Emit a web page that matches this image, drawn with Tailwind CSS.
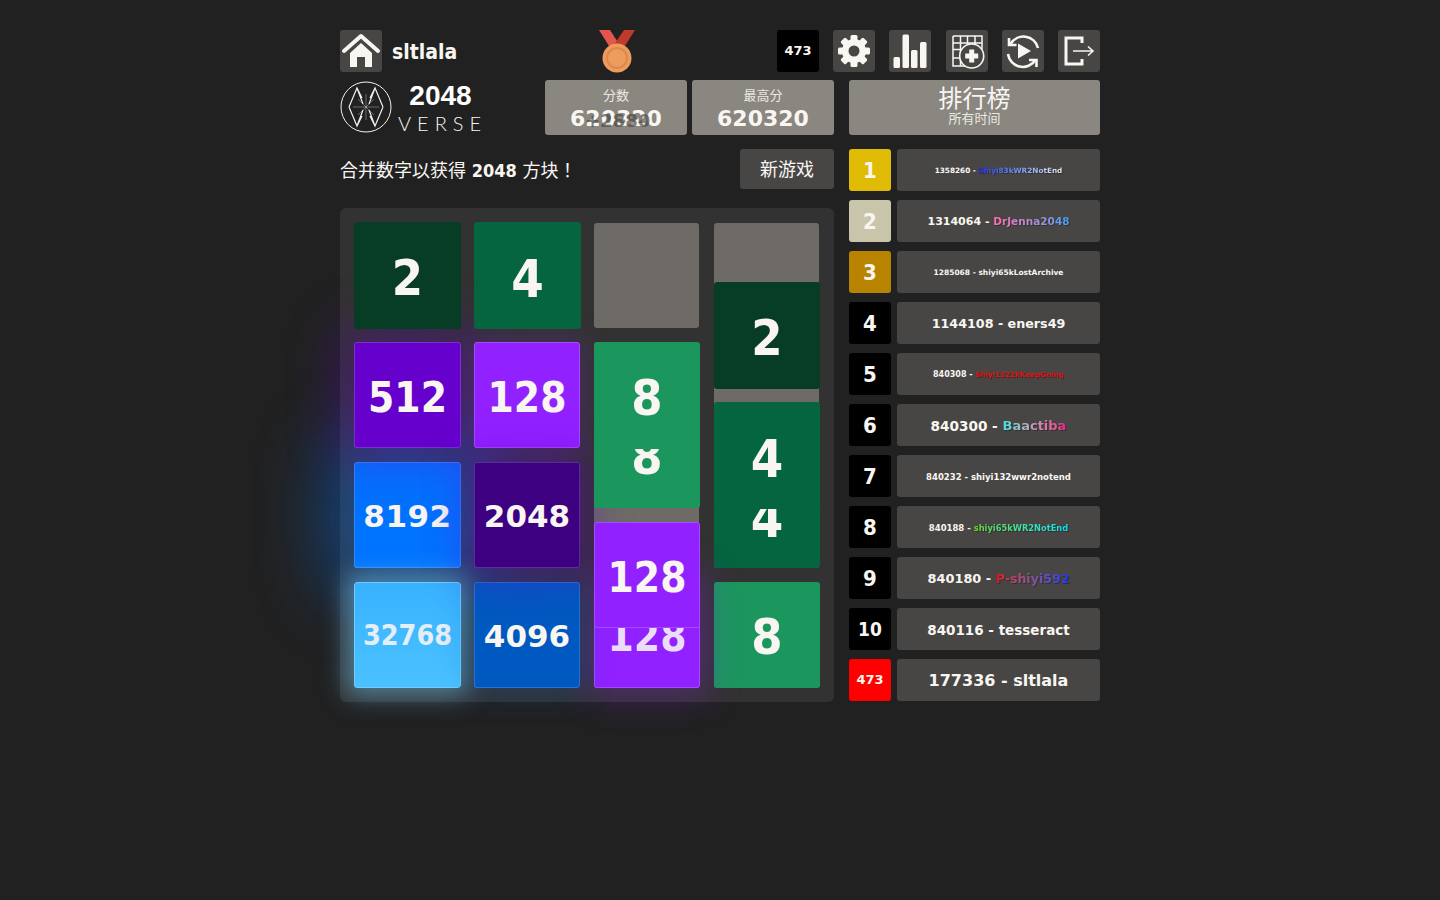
<!DOCTYPE html>
<html lang="ja">
<head>
  <meta charset="UTF-8" />
  <title>2048 Verse</title>
  <script src="https://cdn.jsdelivr.net/npm/@tailwindcss/browser@4"></script>
</head>
<body class="bg-[#212121] h-[900px] overflow-hidden text-[#f9f6f2] font-['DejaVu_Sans','Noto_Sans_CJK_JP',sans-serif]">
  <div class="w-[760px] ml-[340px] pt-[30px]">

    <!-- top bar -->
    <div class="flex items-center h-[42px]">
      <a class="w-[42px] h-[42px] rounded-[3px] bg-[#474645] flex items-center justify-center">
        <svg width="42" height="42" viewBox="0 0 42 42" fill="#f9f6f2"><path d="M4 21 L21 6 L38 21" fill="none" stroke="#f9f6f2" stroke-width="4" stroke-linecap="round" stroke-linejoin="round"/><path d="M10 23 L21 13 L32 23 V37 H25 V27 H17 V37 H10 Z"/></svg>
      </a>
      <div class="w-[207px] ml-[10px] pt-[3px] text-[21px] font-bold font-stretch-condensed leading-none">sltlala</div>
      <svg width="36" height="43" viewBox="0 0 36 43" class="shrink-0">
        <path d="M0 0 H11 L22 17 L15 24 Z" fill="#e2574c"/><path d="M36 0 H25 L12 19 L21 24 Z" fill="#c03a2b"/>
        <circle cx="18" cy="28" r="14.5" fill="#ee9b5b"/><circle cx="18" cy="28" r="10" fill="none" stroke="#d98a50" stroke-width="2"/>
      </svg>
      <div class="ml-auto flex items-center gap-[14px]">
        <div class="w-[42px] h-[42px] rounded-[3px] bg-black flex items-center justify-center text-[13px] font-bold">473</div>
        <div class="w-[42px] h-[42px] rounded-[3px] bg-[#474645]">
          <svg width="42" height="42" viewBox="0 0 42 42" fill="#f9f6f2">
            <g><rect x="17.5" y="5" width="7" height="32" rx="1.5"/><rect x="17.5" y="5" width="7" height="32" rx="1.5" transform="rotate(45 21 21)"/><rect x="17.5" y="5" width="7" height="32" rx="1.5" transform="rotate(90 21 21)"/><rect x="17.5" y="5" width="7" height="32" rx="1.5" transform="rotate(135 21 21)"/></g>
            <circle cx="21" cy="21" r="12"/><circle cx="21" cy="21" r="5.5" fill="#474645"/>
          </svg>
        </div>
        <div class="w-[42px] h-[42px] rounded-[3px] bg-[#474645]">
          <svg width="42" height="42" viewBox="0 0 42 42" fill="#f9f6f2"><rect x="4.5" y="27" width="6.5" height="11" rx="1.5"/><rect x="13.5" y="4.5" width="6.5" height="33.5" rx="1.5"/><rect x="22" y="20" width="6.5" height="18" rx="1.5"/><rect x="31" y="12" width="6.5" height="26" rx="1.5"/></svg>
        </div>
        <div class="w-[42px] h-[42px] rounded-[3px] bg-[#474645] ml-[1px]">
          <svg width="42" height="42" viewBox="0 0 42 42" fill="none" stroke="#f9f6f2">
            <path d="M7 6 H36 V19 M7 6 V36 H20 M7 13 H36 M7 19.5 H36 M7 28 H20 M14.5 6 V36 M21.5 6 V20 M29 6 V20" stroke-width="1.5"/>
            <circle cx="25.7" cy="26" r="12" fill="#474645" stroke-width="1.6"/>
            <path d="M25.7 19.5 V32.5 M19.2 26 H32.2" stroke-width="5"/>
          </svg>
        </div>
        <div class="w-[42px] h-[42px] rounded-[3px] bg-[#474645]">
          <svg width="42" height="42" viewBox="0 0 42 42" fill="#f9f6f2">
            <path d="M8.5 14 A15 15 0 0 1 36 18 M6 24 A15 15 0 0 0 33.5 30" fill="none" stroke="#f9f6f2" stroke-width="2.6"/>
            <path d="M7 8 V15 H14.5 M27 30 H34.5 V37" fill="none" stroke="#f9f6f2" stroke-width="2.6"/>
            <path d="M16 13.5 L29 21 L16 28.5 Z"/>
          </svg>
        </div>
        <div class="w-[42px] h-[42px] rounded-[3px] bg-[#474645]">
          <svg width="42" height="42" viewBox="0 0 42 42" fill="none" stroke="#f9f6f2"><path d="M24 13 V8 H8 V34 H24 V29" stroke-width="3"/><path d="M15 21 H34 M30 16.5 L35 21 L30 25.5" stroke-width="1.6"/></svg>
        </div>
      </div>
    </div>

    <div class="flex mt-[8px]">
      <!-- left column -->
      <div class="w-[494px] shrink-0">
        <div class="flex h-[55px]">
          <div class="w-[205px] flex">
            <svg width="54" height="54" viewBox="1 0 54 54" fill="none" stroke="#f2f0ec" class="shrink-0">
              <circle cx="27" cy="27" r="25" stroke-width="1"/>
              <path d="M10 27 L18 8 L23 18 M10 27 L18 46 L23 36 M44 27 L36 8 L31 18 M44 27 L36 46 L31 36 M18 8 L24 24 M18 46 L24 30 M36 8 L30 24 M36 46 L30 30" stroke-width="1.2"/>
              <path d="M27 14 V40 M14 27 H40 M19 19 L35 35 M35 19 L19 35" stroke-width="0.5" opacity="0.7"/>
            </svg>
            <div class="w-[95px] flex flex-col items-center">
              <div class="font-['Liberation_Sans'] font-bold text-[28px] leading-[28px] mt-[2px] -ml-[2px] text-white">2048</div>
              <div class="text-[20px] font-['Lato'] font-light leading-[24px] tracking-[6px] mt-[1px] ml-[2px] whitespace-nowrap">VERSE</div>
            </div>
          </div>
          <div class="relative w-[142px] h-[55px] rounded-[3px] bg-[#8a8680] flex flex-col items-center">
            <div class="text-[13px] leading-[18px] mt-[7px] text-[#ece9e3]">分数</div>
            <div class="text-[22px] font-bold leading-[28px]">620320</div>
            <div class="absolute left-[40px] top-[29px] text-[18px] font-bold leading-[24px] text-[#4a4846]/70">+2880</div>
          </div>
          <div class="w-[142px] h-[55px] rounded-[3px] bg-[#8a8680] ml-[5px] flex flex-col items-center">
            <div class="text-[13px] leading-[18px] mt-[7px] text-[#ece9e3]">最高分</div>
            <div class="text-[22px] font-bold leading-[28px]">620320</div>
          </div>
        </div>

        <div class="flex items-center justify-between h-[40px] mt-[14px]">
          <p class="text-[18px] pt-[2px]">合并数字以获得 <b class="font-stretch-condensed">2048</b> 方块！</p>
          <button class="w-[94px] h-[40px] rounded-[3px] bg-[#474645] text-[18px]">新游戏</button>
        </div>

        <!-- board -->
        <div class="relative w-[494px] h-[494px] mt-[19px] rounded-[6px] bg-[#333232] pl-[14px] pt-[15px] pr-[15px] pb-[14px] grid grid-cols-4 grid-rows-4 gap-[15px]">
          <div class="rounded-[3px] bg-[#6e6b66]"></div><div class="rounded-[3px] bg-[#6e6b66]"></div><div class="rounded-[3px] bg-[#6e6b66]"></div><div class="rounded-[3px] bg-[#6e6b66]"></div>
          <div class="rounded-[3px] bg-[#6e6b66]"></div><div class="rounded-[3px] bg-[#6e6b66]"></div><div class="rounded-[3px] bg-[#6e6b66]"></div><div class="rounded-[3px] bg-[#6e6b66]"></div>
          <div class="rounded-[3px] bg-[#6e6b66]"></div><div class="rounded-[3px] bg-[#6e6b66]"></div><div class="rounded-[3px] bg-[#6e6b66]"></div><div class="rounded-[3px] bg-[#6e6b66]"></div>
          <div class="rounded-[3px] bg-[#6e6b66]"></div><div class="rounded-[3px] bg-[#6e6b66]"></div><div class="rounded-[3px] bg-[#6e6b66]"></div><div class="rounded-[3px] bg-[#6e6b66]"></div>

          <!-- tiles sit over the cells, some are caught mid-slide -->
          <div class="absolute left-[374px] top-[254px] w-[106px] h-[106px] pt-[7px] rounded-[3px] bg-[#05653e] flex items-center justify-center text-[52px] font-bold font-stretch-condensed">4</div>
          <div class="absolute left-[374px] top-[374px] w-[106px] h-[106px] pt-[5px] rounded-[3px] bg-[#1b965c] flex items-center justify-center text-[50px] font-bold font-stretch-condensed">8</div>
          <div class="absolute left-[254px] top-[373px] w-[106px] h-[107px] pt-[4px] rounded-[3px] bg-[#9221ff] border border-[#a54bff] shadow-[0_0_35px_8px_rgba(146,33,255,0.3)] flex items-center justify-center text-[42px] font-bold font-stretch-condensed text-[#ebdcf7]">128</div>
          <div class="absolute left-[14px] top-[254px] w-[107px] h-[106px] pt-[2px] rounded-[3px] bg-[#0073ff] border border-[#3388f0] shadow-[0_0_70px_25px_rgba(0,115,255,0.45)] flex items-center justify-center text-[31px] font-bold tracking-[0.5px]">8192</div>
          <div class="absolute left-[14px] top-[374px] w-[107px] h-[106px] pt-[2px] rounded-[3px] bg-linear-to-b from-[#38b2ff] to-[#4ac2ff] border border-[#70ccff] shadow-[0_0_25px_8px_rgba(110,205,255,0.5)] flex items-center justify-center text-[28.5px] font-bold font-stretch-condensed text-[#e6eef5]">32768</div>
          <div class="absolute left-[134px] top-[374px] w-[106px] h-[106px] pt-[2px] rounded-[3px] bg-[#0059c0] border border-[#2a70d0] shadow-[0_0_30px_5px_rgba(0,89,192,0.3)] flex items-center justify-center text-[31px] font-bold">4096</div>
          <div class="absolute left-[14px] top-[134px] w-[107px] h-[106px] pt-[4px] rounded-[3px] bg-[#6600cc] border border-[#7b30cc] shadow-[0_0_50px_15px_rgba(102,0,204,0.35)] flex items-center justify-center text-[42px] font-bold font-stretch-condensed">512</div>
          <div class="absolute left-[134px] top-[134px] w-[106px] h-[106px] pt-[4px] rounded-[3px] bg-[#9221ff] border border-[#a54bff] shadow-[0_0_30px_5px_rgba(146,33,255,0.2)] flex items-center justify-center text-[42px] font-bold font-stretch-condensed">128</div>
          <div class="absolute left-[134px] top-[254px] w-[106px] h-[106px] pt-[2px] rounded-[3px] bg-[#3c0080] border border-[#5c2d9a] shadow-[0_0_40px_10px_rgba(102,0,204,0.4)] flex items-center justify-center text-[31px] font-bold">2048</div>
          <div class="absolute left-[254px] top-[193px] w-[106px] h-[107px] pt-[5px] rounded-[3px] bg-[#1b965c] flex items-center justify-center text-[50px] font-bold font-stretch-condensed">8</div>
          <div class="absolute left-[14px] top-[14px] w-[107px] h-[107px] pt-[5px] rounded-[3px] bg-[#063d24] flex items-center justify-center text-[50px] font-bold font-stretch-condensed">2</div>
          <div class="absolute left-[134px] top-[14px] w-[107px] h-[107px] pt-[7px] rounded-[3px] bg-[#05653e] flex items-center justify-center text-[52px] font-bold font-stretch-condensed">4</div>
          <div class="absolute left-[254px] top-[134px] w-[106px] h-[107px] pt-[5px] rounded-[3px] bg-[#1b965c] flex items-center justify-center text-[50px] font-bold font-stretch-condensed">8</div>
          <div class="absolute left-[374px] top-[74px] w-[106px] h-[107px] pt-[5px] rounded-[3px] bg-[#063d24] flex items-center justify-center text-[50px] font-bold font-stretch-condensed">2</div>
          <div class="absolute left-[374px] top-[194px] w-[106px] h-[107px] pt-[7px] rounded-[3px] bg-[#05653e] flex items-center justify-center text-[52px] font-bold font-stretch-condensed">4</div>
          <div class="absolute left-[254px] top-[314px] w-[106px] h-[106px] pt-[4px] rounded-[3px] bg-[#9221ff] border border-[#a54bff] flex items-center justify-center text-[42px] font-bold font-stretch-condensed">128</div>
        </div>
      </div>

      <!-- leaderboard -->
      <div class="w-[251px] ml-[15px]">
        <div class="h-[55px] rounded-[3px] bg-[#8a8680] flex flex-col items-center">
          <div class="text-[24px] leading-[28px] mt-[5px]">排行榜</div>
          <div class="text-[13px] leading-[16px] text-[#ece9e3] -mt-[2px]">所有时间</div>
        </div>
        <ul class="mt-[14px] flex flex-col gap-[9px]">
          <li class="flex gap-[6px] h-[42px]">
            <div class="w-[42px] rounded-[3px] bg-[#e0bb05] flex items-center justify-center text-[22px] font-bold font-stretch-condensed">1</div>
            <div class="flex-1 pt-[2px] rounded-[3px] bg-[#474645] flex items-center justify-center text-[7.3px] font-bold whitespace-pre">1358260 - <span class="bg-linear-to-r from-[#2a10ff] to-[#f0eef0] bg-clip-text text-transparent drop-shadow-[1px_1px_0_rgba(0,0,0,0.3)]">Shiyi83kWR2NotEnd</span></div>
          </li>
          <li class="flex gap-[6px] h-[42px]">
            <div class="w-[42px] rounded-[3px] bg-[#c9c5ab] flex items-center justify-center text-[22px] font-bold font-stretch-condensed">2</div>
            <div class="flex-1 pt-[2px] rounded-[3px] bg-[#474645] flex items-center justify-center text-[11px] font-bold whitespace-pre">1314064 - <span class="text-[10.5px] bg-linear-to-r from-[#ff69b4] to-[#30a0f5] bg-clip-text text-transparent drop-shadow-[1px_1px_0_rgba(0,0,0,0.3)]">DrJenna2048</span></div>
          </li>
          <li class="flex gap-[6px] h-[42px]">
            <div class="w-[42px] rounded-[3px] bg-[#b88400] flex items-center justify-center text-[22px] font-bold font-stretch-condensed">3</div>
            <div class="flex-1 pt-[2px] rounded-[3px] bg-[#474645] flex items-center justify-center text-[7.5px] font-bold whitespace-pre">1285068 - shiyi65kLostArchive</div>
          </li>
          <li class="flex gap-[6px] h-[42px]">
            <div class="w-[42px] rounded-[3px] bg-black flex items-center justify-center text-[22px] font-bold font-stretch-condensed">4</div>
            <div class="flex-1 pt-[2px] rounded-[3px] bg-[#474645] flex items-center justify-center text-[12.7px] font-bold whitespace-pre">1144108 - eners49</div>
          </li>
          <li class="flex gap-[6px] h-[42px]">
            <div class="w-[42px] rounded-[3px] bg-black flex items-center justify-center text-[22px] font-bold font-stretch-condensed">5</div>
            <div class="flex-1 pt-[2px] rounded-[3px] bg-[#474645] flex items-center justify-center text-[8px] font-bold whitespace-pre">840308 - <span class="text-[7.2px] text-[#f01010] drop-shadow-[1px_1px_0_rgba(0,0,0,0.3)]">Shiyi1322kKeepGoing</span></div>
          </li>
          <li class="flex gap-[6px] h-[42px]">
            <div class="w-[42px] rounded-[3px] bg-black flex items-center justify-center text-[22px] font-bold font-stretch-condensed">6</div>
            <div class="flex-1 pt-[2px] rounded-[3px] bg-[#474645] flex items-center justify-center text-[13.6px] font-bold whitespace-pre">840300 - <span class="text-[13px] bg-linear-to-r from-[#00e5e0] to-[#f0108a] bg-clip-text text-transparent drop-shadow-[1px_1px_0_rgba(0,0,0,0.3)]">Baactiba</span></div>
          </li>
          <li class="flex gap-[6px] h-[42px]">
            <div class="w-[42px] rounded-[3px] bg-black flex items-center justify-center text-[22px] font-bold font-stretch-condensed">7</div>
            <div class="flex-1 pt-[2px] rounded-[3px] bg-[#474645] flex items-center justify-center text-[8.5px] font-bold whitespace-pre">840232 - shiyi132wwr2notend</div>
          </li>
          <li class="flex gap-[6px] h-[42px]">
            <div class="w-[42px] rounded-[3px] bg-black flex items-center justify-center text-[22px] font-bold font-stretch-condensed">8</div>
            <div class="flex-1 pt-[2px] rounded-[3px] bg-[#474645] flex items-center justify-center text-[8.5px] font-bold whitespace-pre">840188 - <span class="text-[8.3px] bg-linear-to-r from-[#60e010] to-[#00e0f0] bg-clip-text text-transparent drop-shadow-[1px_1px_0_rgba(0,0,0,0.3)]">shiyi65kWR2NotEnd</span></div>
          </li>
          <li class="flex gap-[6px] h-[42px]">
            <div class="w-[42px] rounded-[3px] bg-black flex items-center justify-center text-[22px] font-bold font-stretch-condensed">9</div>
            <div class="flex-1 pt-[2px] rounded-[3px] bg-[#474645] flex items-center justify-center text-[12.9px] font-bold whitespace-pre">840180 - <span class="text-[12.6px] bg-linear-to-r from-[#e00010] to-[#1030ff] bg-clip-text text-transparent drop-shadow-[1px_1px_0_rgba(0,0,0,0.3)]">P-shiyi592</span></div>
          </li>
          <li class="flex gap-[6px] h-[42px]">
            <div class="w-[42px] rounded-[3px] bg-black flex items-center justify-center text-[19px] font-bold font-stretch-condensed pt-[1px]">10</div>
            <div class="flex-1 pt-[2px] rounded-[3px] bg-[#474645] flex items-center justify-center text-[13.5px] font-bold whitespace-pre">840116 - tesseract</div>
          </li>
          <li class="flex gap-[6px] h-[42px]">
            <div class="w-[42px] rounded-[3px] bg-[#ff0000] flex items-center justify-center text-[13px] font-bold">473</div>
            <div class="flex-1 pt-[2px] rounded-[3px] bg-[#474645] flex items-center justify-center text-[16px] font-bold whitespace-pre">177336 - sltlala</div>
          </li>
        </ul>
      </div>
    </div>
  </div>
</body>
</html>
